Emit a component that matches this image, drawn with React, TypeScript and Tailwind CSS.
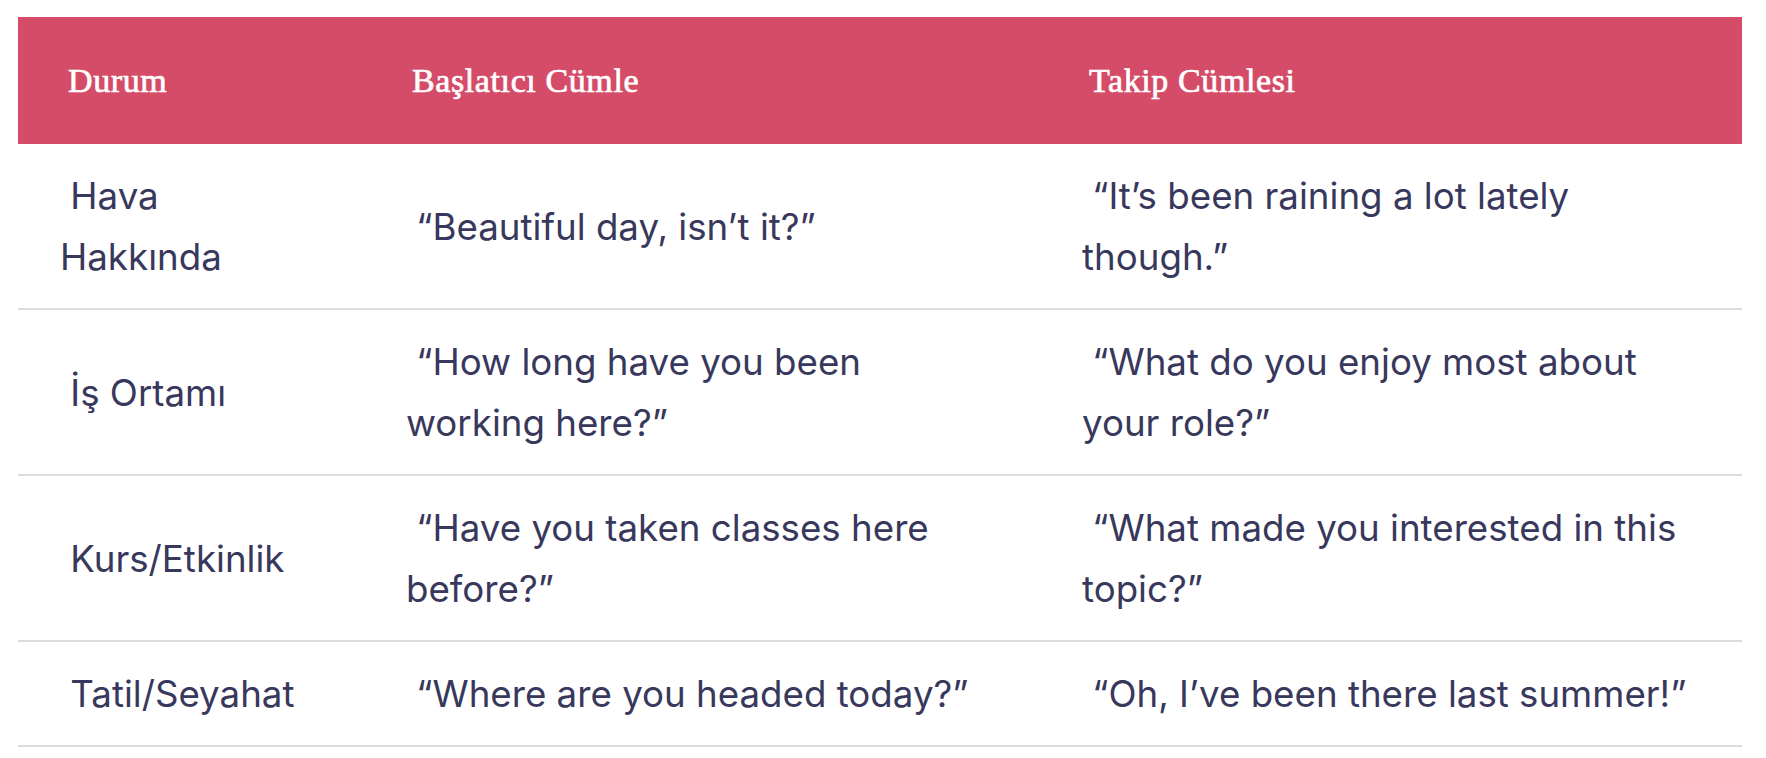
const rows: { situation: string; opener: string; followUp: string }[] = [
    {
        situation: '\u00a0Hava Hakkında',
        opener: '\u00a0“Beautiful day, isn’t it?”',
        followUp: '\u00a0“It’s been raining a lot lately though.”',
    },
    {
        situation: '\u00a0İş Ortamı',
        opener: '\u00a0“How long have you been working here?”',
        followUp: '\u00a0“What do you enjoy most about your role?”',
    },
    {
        situation: '\u00a0Kurs/Etkinlik',
        opener: '\u00a0“Have you taken classes here before?”',
        followUp: '\u00a0“What made you interested in this topic?”',
    },
    {
        situation: '\u00a0Tatil/Seyahat',
        opener: '\u00a0“Where are you headed today?”',
        followUp: '\u00a0“Oh, I’ve been there last summer!”',
    },
];

export default function App() {
    return (
        <div className="min-h-screen bg-white pt-[17px] pl-[18px]">
            <table className="w-[1724px] table-fixed">
                <colgroup>
                    <col className="w-[346px]" />
                    <col className="w-[676px]" />
                    <col />
                </colgroup>
                <thead>
                    <tr className="h-[127px] bg-[#d54c69] text-left font-['Liberation_Serif',serif] text-[34px] tracking-[0.6px] text-white [-webkit-text-stroke:0.7px_white]">
                        <th className="pl-[50px] font-normal">Durum</th>
                        <th className="pl-[48px] font-normal">Başlatıcı Cümle</th>
                        <th className="pl-[49px] font-normal">Takip Cümlesi</th>
                    </tr>
                </thead>
                <tbody className="font-['Inter',sans-serif] text-[36.7px] leading-[61px] text-[#38385c]">
                    {rows.map((row) => (
                        <tr key={row.situation} className="border-b-2 border-[#dcdcdc]">
                            <td className="py-[21px] pl-[42px] pr-[54px]">{row.situation}</td>
                            <td className="py-[21px] pl-[42px] pr-[50px]">{row.opener}</td>
                            <td className="py-[21px] pl-[42px] pr-[40px]">{row.followUp}</td>
                        </tr>
                    ))}
                </tbody>
            </table>
        </div>
    );
}
